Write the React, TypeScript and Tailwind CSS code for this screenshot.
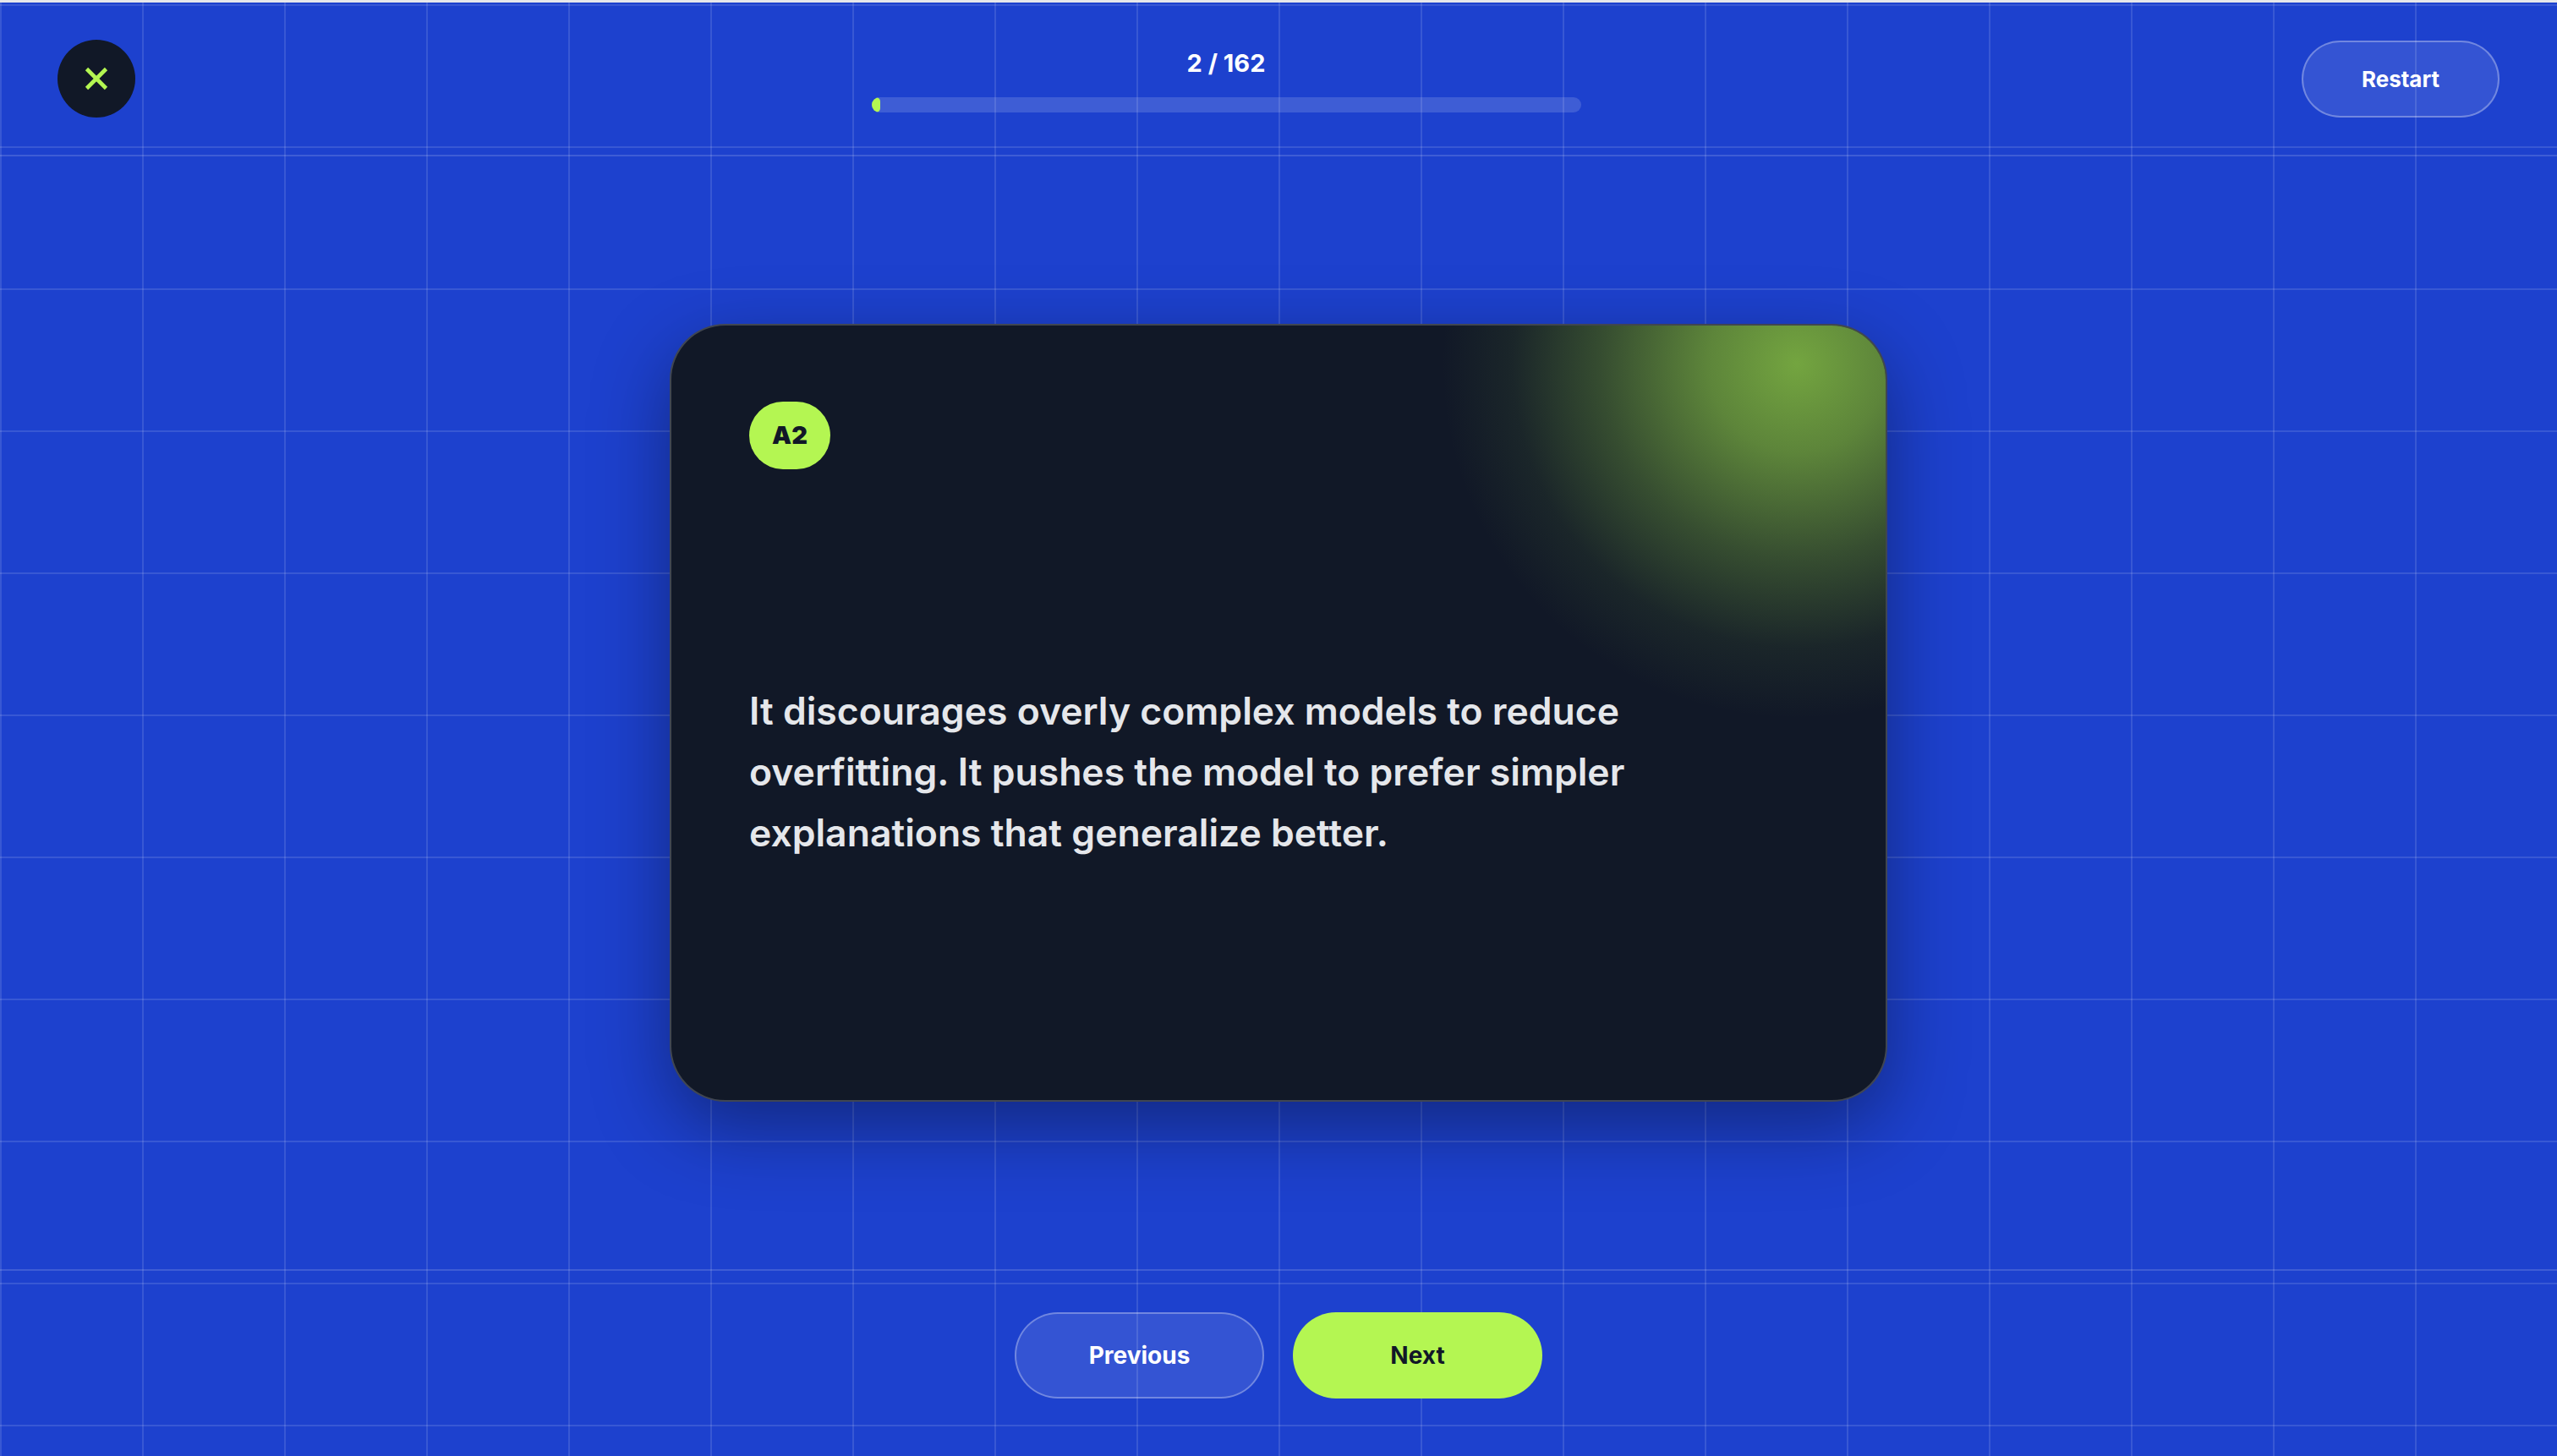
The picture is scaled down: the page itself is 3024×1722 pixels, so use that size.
import React from "react";

export default function App() {
  const current = 2;
  const total = 162;
  const pct = (current / total) * 100;
  return (
    <div
      className="w-[3024px] h-[1722px] overflow-hidden flex flex-col bg-[#e6e7ea]"
      style={{ fontFamily: "Inter, 'Noto Sans', sans-serif" }}
    >
      <div className="h-[3px] shrink-0 bg-[#e6e7ea]" />
      <div className="flex-1 flex flex-col bg-[#1d41ce] bg-[linear-gradient(to_right,rgba(255,255,255,0.12)_2px,transparent_2px),linear-gradient(to_bottom,rgba(255,255,255,0.12)_2px,transparent_2px)] bg-[size:168px_168px] bg-[position:0px_2px]">
        {/* Header */}
        <header className="shrink-0 flex items-center justify-between px-[68px] py-[44px] border-b-2 border-white/15">
          <button className="w-[92px] h-[92px] rounded-full bg-[#111827] flex items-center justify-center">
            <svg width="46" height="46" viewBox="0 0 24 24" fill="none" stroke="#b4f652" strokeWidth="2.4" strokeLinecap="butt" strokeLinejoin="round">
              <path d="M18 6 6 18" />
              <path d="m6 6 12 12" />
            </svg>
          </button>
          <div className="ml-[18px] w-[839px] flex flex-col items-center gap-[22px] pt-[4px]">
            <div className="text-white font-bold text-[29px] leading-[36px]">
              {current} / {total}
            </div>
            <div className="w-full h-[18px] rounded-full bg-white/15 overflow-hidden">
              <div className="h-full rounded-full bg-[#b4f652]" style={{ width: `${pct}%` }} />
            </div>
          </div>
          <button className="w-[234px] h-[91px] rounded-full bg-white/10 border-2 border-white/30 text-white font-bold text-[26px]">
            Restart
          </button>
        </header>

        {/* Main */}
        <main className="flex-1 flex items-center justify-center">
          <div className="relative w-[1440px] h-[920px] rounded-[66px] bg-[#111827] border-2 border-white/20 overflow-hidden shadow-[0_30px_90px_rgba(0,0,0,0.38)]">
            <div className="absolute left-[911px] top-[-375px] w-[840px] h-[840px] rounded-full bg-[radial-gradient(circle_closest-side,rgba(140,200,70,0.8)_0%,rgba(140,200,70,0.62)_25%,rgba(140,200,70,0.3)_55%,rgba(140,200,70,0.08)_80%,transparent_100%)]" />
            <div className="relative flex flex-col items-start px-[92px] pt-[90px]">
              <div className="w-[96px] h-[80px] rounded-full bg-[#b4f652] flex items-center justify-center text-[#111827] font-black text-[29px]">
                A2
              </div>
              <p className="mt-[250px] max-w-[1090px] text-[#e5e7eb] font-semibold text-[44.5px] leading-[72px]">
                It discourages overly complex models to reduce overfitting. It pushes the model to prefer simpler explanations that generalize better.
              </p>
            </div>
          </div>
        </main>

        {/* Footer */}
        <footer className="shrink-0 flex items-start justify-center gap-[34px] pt-[49px] h-[221px] border-t-2 border-white/15">
          <button className="w-[295px] h-[102px] rounded-full bg-white/10 border-2 border-white/30 text-white font-bold text-[28px]">
            Previous
          </button>
          <button className="w-[295px] h-[102px] rounded-full bg-[#b4f652] text-[#111827] font-bold text-[28px]">
            Next
          </button>
        </footer>
      </div>
    </div>
  );
}
